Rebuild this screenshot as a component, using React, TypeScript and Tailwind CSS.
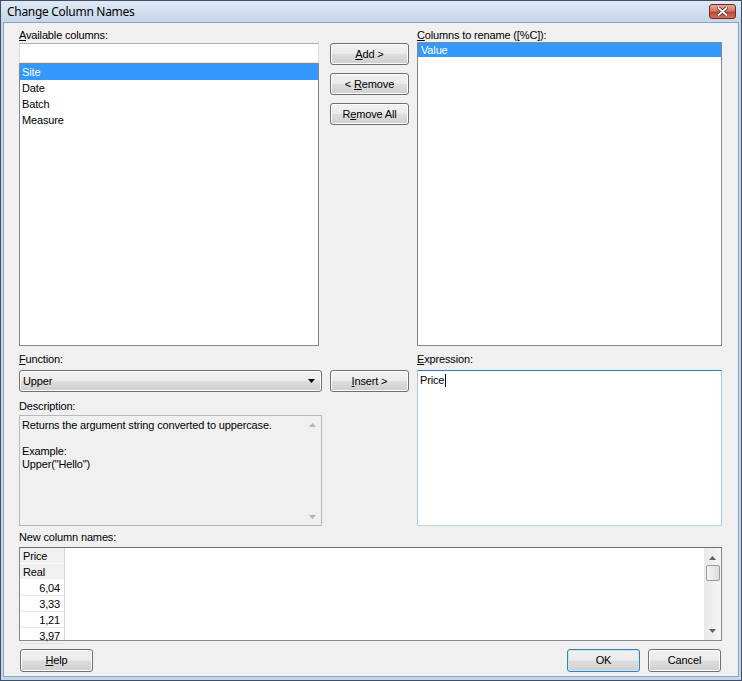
import React from "react";
import { twMerge } from "tailwind-merge";

const btnFace =
  "bg-[linear-gradient(to_bottom,#f2f2f2_0%,#ebebeb_48%,#dddddd_52%,#cfcfcf_100%)] shadow-[inset_0_0_0_1px_#fcfcfc]";

function Btn({
  children,
  className,
  isDefault,
}: {
  children: React.ReactNode;
  className?: string;
  isDefault?: boolean;
}) {
  return (
    <div
      className={twMerge(
        "flex items-center justify-center rounded-[3px] border text-[11px]",
        btnFace,
        isDefault
          ? "border-[#3c7fb1] shadow-[inset_0_0_0_1px_#c6e6f7]"
          : "border-[#707070]",
        className
      )}
    >
      {children}
    </div>
  );
}

function U({ children }: { children: React.ReactNode }) {
  return <span className="underline underline-offset-[1px]">{children}</span>;
}

function Tri({ up, color }: { up?: boolean; color: string }) {
  return (
    <svg width="7" height="4" viewBox="0 0 7 4">
      <path d={up ? "M0 4 L3.5 0 L7 4 Z" : "M0 0 L7 0 L3.5 4 Z"} fill={color} />
    </svg>
  );
}

function TitleBar() {
  return (
    <div className="flex h-[21px] items-start justify-between bg-[linear-gradient(to_bottom,#dfe9f5,#c4d6eb)]">
      <div className="pl-[6px] pt-[3px] font-['Noto_Sans',sans-serif] text-[12px] leading-[16px] tracking-[-0.3px]">
        Change Column Names
      </div>
      <div className="mr-[5px] mt-[3px] flex h-[15px] w-[27px] items-center justify-center rounded-[3px] border border-[#6b2b22] bg-[linear-gradient(to_bottom,#e5a99c_0%,#d47966_45%,#c24530_55%,#d2705b_100%)]">
        <svg width="11" height="9" viewBox="0 0 11 9">
          <path d="M1.5 1 L9.5 8 M9.5 1 L1.5 8" stroke="#4a1a14" strokeWidth="3.4" strokeLinecap="round" />
          <path d="M1.5 1 L9.5 8 M9.5 1 L1.5 8" stroke="#ffffff" strokeWidth="2" strokeLinecap="round" />
        </svg>
      </div>
    </div>
  );
}

const available = ["Site", "Date", "Batch", "Measure"];
const values = ["6,04", "3,33", "1,21", "3,97"];

export default function App() {
  return (
    <div className="flex h-[681px] w-[742px] flex-col border border-[#3f4f66] bg-[#c4d6eb] font-['Liberation_Sans',Arial,sans-serif] text-[11px] leading-[13px] tracking-[-0.15px] text-black">
      <TitleBar />
      <div className="mx-[2px] mb-[3px] flex flex-1 flex-col border border-[#8ea3bd] bg-[#f0f0f0] pl-[15px] pt-[6px]">
        {/* top: column lists */}
        <div className="flex h-[317px] gap-[8px]">
          <div className="flex w-[303px] flex-col">
            <div className="h-[14px]">
              <U>A</U>vailable columns:
            </div>
            <div className="h-[20px] w-[300px] border border-[#abadb3] border-x-[#dbdfe6] border-b-[#e3e9ef] bg-white" />
            <div className="h-[283px] w-[300px] border border-[#828790] bg-white">
              {available.map((c, i) => (
                <div
                  key={c}
                  className={twMerge(
                    "h-[16px] pl-[2px] leading-[16px]",
                    i === 0 && "bg-[#3399ff] text-white"
                  )}
                >
                  {c}
                </div>
              ))}
            </div>
          </div>
          <div className="flex w-[79px] flex-col gap-[8px] pt-[14px]">
            <Btn className="h-[22px]">
              <span>
                <U>A</U>dd &gt;
              </span>
            </Btn>
            <Btn className="h-[22px]">
              <span>
                &lt; <U>R</U>emove
              </span>
            </Btn>
            <Btn className="h-[22px]">
              <span>
                R<U>e</U>move All
              </span>
            </Btn>
          </div>
          <div className="flex w-[305px] flex-col">
            <div className="h-[13px]">
              <U>C</U>olumns to rename ([%C]):
            </div>
            <div className="h-[304px] border border-[#828790] bg-white">
              <div className="h-[14px] bg-[#3399ff] pl-[3px] leading-[14px] text-white">
                Value
              </div>
            </div>
          </div>
        </div>

        {/* middle: function / expression */}
        <div className="mt-[6px] flex h-[174px] gap-[8px]">
          <div className="flex w-[303px] flex-col">
            <div className="h-[18px] pt-[1px]">
              <U>F</U>unction:
            </div>
            <Btn className="h-[22px] justify-between pl-[3px] pr-[6px]">
              <span>Upper</span>
              <Tri color="#000000" />
            </Btn>
            <div className="h-[23px] pt-[8px]">Description:</div>
            <div className="flex h-[111px] border border-[#b5b9bd] bg-[#f0f0f0]">
              <div className="flex-1 pl-[2px] pt-[3px] leading-[13px]">
                Returns the argument string converted to uppercase.
                <br />
                <br />
                Example:
                <br />
                Upper("Hello")
              </div>
              <div className="flex w-[17px] flex-col items-center justify-between pb-[6px] pt-[7px]">
                <Tri up color="#b4b4b4" />
                <Tri color="#b4b4b4" />
              </div>
            </div>
          </div>
          <div className="flex w-[79px] flex-col pt-[18px]">
            <Btn className="h-[22px]">
              <span>
                <U>I</U>nsert &gt;
              </span>
            </Btn>
          </div>
          <div className="flex w-[305px] flex-col">
            <div className="h-[18px] pt-[1px]">
              <U>E</U>xpression:
            </div>
            <div className="h-[156px] border border-[#a4c9e3] border-t-[#3d7bad] border-b-[#b7d9ed] bg-white pl-[2px] pt-[3px]">
              <div className="flex h-[13px] items-center">
                <span>Price</span>
                <span className="ml-[1px] h-[13px] w-[1px] bg-black" />
              </div>
            </div>
          </div>
        </div>

        {/* bottom: preview grid */}
        <div className="h-[21px] pt-[5px]">New column names:</div>
        <div className="flex h-[94px] w-[703px] border border-[#828790] border-t-[#6d6d6d] bg-white">
          <div className="flex w-[45px] flex-col border-r border-[#d8d8d8]">
            <div className="h-[16px] border-b border-white bg-[#f0f0f0] pl-[3px] leading-[16px]">
              Price
            </div>
            <div className="h-[16px] border-b border-white bg-[#f0f0f0] pl-[3px] leading-[16px]">
              Real
            </div>
            {values.map((v) => (
              <div
                key={v}
                className="h-[16px] shrink-0 border-b border-[#e4e4e4] pr-[4px] text-right leading-[16px]"
              >
                {v}
              </div>
            ))}
          </div>
          <div className="flex-1" />
          <div className="flex w-[17px] flex-col items-center bg-[linear-gradient(to_right,#e8e8e8,#f5f5f5)] pt-[8px]">
            <Tri up color="#606060" />
            <div className="mt-[5px] h-[16px] w-[14px] rounded-[2px] border border-[#9a9a9a] bg-[linear-gradient(to_right,#f4f4f4,#dcdcdc)]" />
            <div className="flex-1" />
            <div className="pb-[7px]">
              <Tri color="#606060" />
            </div>
          </div>
        </div>

        <div className="mt-[8px] flex w-[702px] items-center">
          <Btn className="ml-[1px] h-[23px] w-[73px]">
            <span>
              <U>H</U>elp
            </span>
          </Btn>
          <div className="flex-1" />
          <Btn isDefault className="h-[23px] w-[73px]">
            OK
          </Btn>
          <Btn className="ml-[8px] h-[23px] w-[73px]">Cancel</Btn>
        </div>
      </div>
    </div>
  );
}
